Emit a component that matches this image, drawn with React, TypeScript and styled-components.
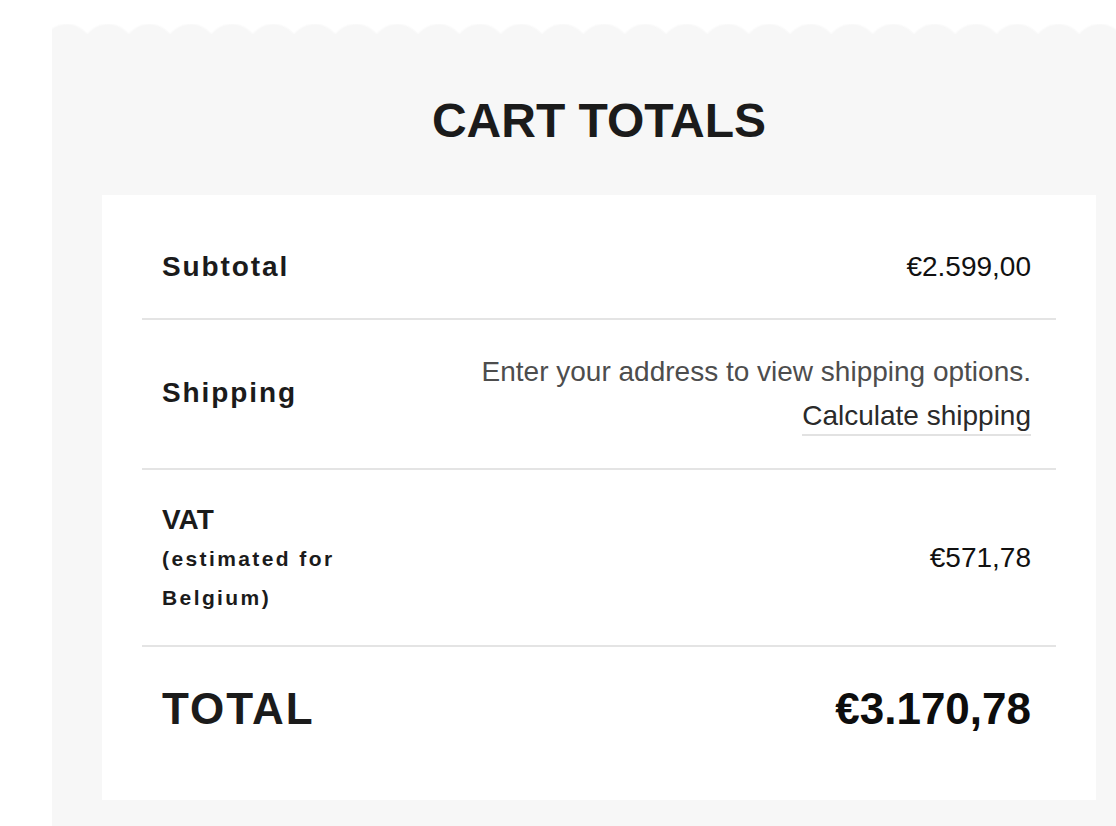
import React from "react";
import styled, { createGlobalStyle } from "styled-components";

const GlobalStyle = createGlobalStyle`
  html, body {
    margin: 0;
    padding: 0;
    background: #ffffff;
    overflow: hidden;
  }
  body {
    font-family: "Liberation Sans", Arial, Helvetica, sans-serif;
    color: #1b1b1b;
  }
`;

const Page = styled.div`
  padding: 24px 0 0 52px;
`;

const Panel = styled.section`
  width: 1094px;
  display: flex;
  flex-direction: column;
`;

const ScallopEdge = styled.div`
  height: 10px;
  background-image: radial-gradient(
    circle at 50% 26.5px,
    #f7f7f7 25.2px,
    rgba(247, 247, 247, 0) 27.6px
  );
  background-size: 41.33px 10px;
  background-repeat: repeat-x;
  background-position: -6px 0;
`;

const PanelBody = styled.div`
  background: #f7f7f7;
  padding: 58px 50px 40px;
`;

const Title = styled.h2`
  margin: 0 0 45px;
  text-align: center;
  font-size: 48px;
  line-height: 57.6px;
  font-weight: 700;
  color: #1b1b1b;
`;

const Card = styled.div`
  background: #ffffff;
  padding: 21px 40px 29px;
`;

const Row = styled.div<{ $pt?: number; $pb?: number; $last?: boolean }>`
  display: flex;
  justify-content: space-between;
  align-items: center;
  padding: ${(p) => p.$pt ?? 30}px 25px ${(p) => p.$pb ?? 30}px 20px;
  border-bottom: ${(p) => (p.$last ? "none" : "2px solid #e4e4e4")};
`;

const Label = styled.div`
  font-size: 28px;
  line-height: 42px;
  font-weight: 700;
  letter-spacing: 1.9px;
  color: #1b1b1b;
`;

const LabelStack = styled.div`
  display: flex;
  flex-direction: column;
`;

const VatTitle = styled.div`
  font-size: 28px;
  line-height: 39px;
  font-weight: 700;
  color: #1b1b1b;
`;

const VatNote = styled.div`
  font-size: 21px;
  line-height: 39px;
  font-weight: 700;
  letter-spacing: 2.4px;
  color: #1b1b1b;
  width: 200px;
`;

const Amount = styled.div`
  font-size: 28px;
  line-height: 42px;
  color: #111111;
`;

const ShippingInfo = styled.div`
  display: flex;
  flex-direction: column;
  align-items: flex-end;
`;

const ShippingNote = styled.p`
  margin: 0;
  font-size: 28px;
  line-height: 44px;
  color: #4d4d4d;
`;

const ShippingLink = styled.a`
  display: inline-block;
  margin-top: 6px;
  font-size: 28px;
  line-height: 32px;
  padding-bottom: 2px;
  border-bottom: 2px solid #e2e2e2;
  color: #2a2a2a;
  text-decoration: none;
  cursor: pointer;
`;

const TotalLabel = styled.div`
  font-size: 44px;
  line-height: 66px;
  font-weight: 700;
  letter-spacing: 2px;
  color: #1b1b1b;
`;

const TotalAmount = styled.div`
  font-size: 44px;
  line-height: 66px;
  font-weight: 700;
  color: #0d0d0d;
`;

export default function App() {
  return (
    <>
      <GlobalStyle />
      <Page>
        <Panel>
          <ScallopEdge />
          <PanelBody>
            <Title>CART TOTALS</Title>
            <Card>
              <Row>
                <Label>Subtotal</Label>
                <Amount>€2.599,00</Amount>
              </Row>
              <Row $pb={32}>
                <Label>Shipping</Label>
                <ShippingInfo>
                  <ShippingNote>Enter your address to view shipping options.</ShippingNote>
                  <ShippingLink>Calculate shipping</ShippingLink>
                </ShippingInfo>
              </Row>
              <Row $pb={28}>
                <LabelStack>
                  <VatTitle>VAT</VatTitle>
                  <VatNote>(estimated for Belgium)</VatNote>
                </LabelStack>
                <Amount>€571,78</Amount>
              </Row>
              <Row $pt={29} $pb={29} $last>
                <TotalLabel>TOTAL</TotalLabel>
                <TotalAmount>€3.170,78</TotalAmount>
              </Row>
            </Card>
          </PanelBody>
        </Panel>
      </Page>
    </>
  );
}
